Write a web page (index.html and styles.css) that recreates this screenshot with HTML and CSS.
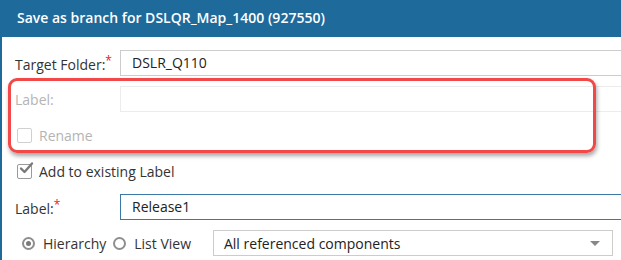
FILE: index.html
```html
<!DOCTYPE html>
<html lang="en">
<head>
<meta charset="UTF-8" />
<meta name="viewport" content="width=device-width, initial-scale=1" />
<title>Save as branch</title>
<link rel="stylesheet" href="styles.css">
</head>
<body>

<div class="dialog">
  <div class="dialog-header">Save as branch for DSLQR_Map_1400 (927550)</div>

  <div class="dialog-body">
    <div class="row">
      <label class="row-label">Target Folder:<span class="req">*</span></label>
      <div class="field">DSLR_Q110</div>
    </div>

    <div class="row disabled">
      <label class="row-label">Label:</label>
      <div class="field"></div>
    </div>

    <div class="row disabled">
      <span class="check"></span>
      <span class="check-text">Rename</span>
    </div>

    <div class="row">
      <span class="check checked">
        <svg width="18" height="18" viewBox="0 0 18 18">
          <path d="M4 8.5 L7.5 12 L15 3.5" fill="none" stroke="#7a7a7a" stroke-width="2.4" stroke-linecap="round" stroke-linejoin="round"/>
        </svg>
      </span>
      <span class="check-text">Add to existing Label</span>
    </div>

    <div class="row">
      <label class="row-label">Label:<span class="req">*</span></label>
      <div class="field focused">Release1</div>
    </div>

    <div class="row radios">
      <span class="radio selected"></span>
      <span class="radio-text">Hierarchy</span>
      <span class="radio"></span>
      <span class="radio-text">List View</span>
      <div class="select">
        <span>All referenced components</span>
        <span class="caret"></span>
      </div>
    </div>
  </div>

  <div class="highlight"></div>
</div>

</body>
</html>
```

FILE: styles.css
```css
body { margin: 0; overflow: hidden; font-family: "Open Sans", Arial, sans-serif; font-size: 14px; color: #333; background: #fff; }
.dialog { position: relative; width: 640px; height: 260px; border-left: 2px solid #1d6a9b; box-sizing: border-box; }
.dialog-header {
  height: 37px; background: #1d6a9b; color: #fff; font-weight: 600; font-size: 14px;
  padding-left: 17px; line-height: 36px; margin-left: -2px;
}
.dialog-body { padding: 13px 0 0 13px; }
.row { display: flex; align-items: center; height: 26px; margin-bottom: 10px; }
.row-label { width: 105px; flex: none; }
.req { color: #e21d1d; font-size: 12px; vertical-align: 5px; }
.field {
  flex: 1; height: 26px; box-sizing: border-box; border: 1px solid #ccc; border-right: none;
  padding-left: 11px; line-height: 24px; font-size: 14px; color: #222;
}
.field.focused { border-color: #3b78a6; }
.row.disabled .row-label, .row.disabled .check-text { color: #b4b4b4; }
.row.disabled .field { border-color: #ececec; }
.check {
  width: 15px; height: 15px; border: 1px solid #d0d0d0; border-radius: 2px; box-sizing: border-box;
  position: relative; margin-left: 2px; flex: none;
}
.check.checked { border-color: #9a9a9a; }
.check svg { position: absolute; left: -1px; top: -5px; }
.check-text { margin-left: 7px; }
.radios { padding-left: 7px; }
.radio {
  width: 13px; height: 13px; border: 2px solid #8e8e8e; border-radius: 50%; box-sizing: border-box;
  display: flex; align-items: center; justify-content: center; flex: none;
}
.radio.selected::after { content: ""; width: 5px; height: 5px; border-radius: 50%; background: #7a7a7a; }
.radio-text { margin: 0 7px 0 8px; }
.select {
  width: 400px; height: 26px; box-sizing: border-box; border: 1px solid #ccc; margin-left: 15px;
  display: flex; align-items: center; justify-content: space-between; padding: 0 12px 0 10px;
  font-size: 14px; color: #222;
}
.caret { width: 0; height: 0; border-left: 5px solid transparent; border-right: 5px solid transparent; border-top: 5px solid #888; }
.highlight {
  position: absolute; left: 6px; top: 78px; width: 588px; height: 75px; box-sizing: border-box;
  border: 3px solid #f24848; border-radius: 9px; box-shadow: 1px 3px 4px rgba(0,0,0,.35);
}
```
